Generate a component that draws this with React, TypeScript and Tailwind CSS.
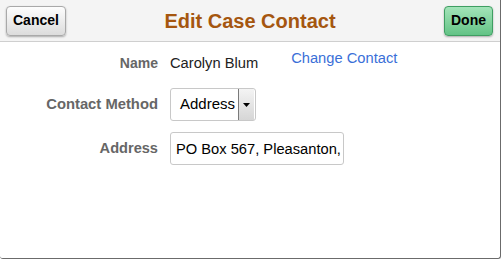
import { useState } from 'react'

export default function App() {
  const [method, setMethod] = useState('Address')
  const [address, setAddress] = useState('PO Box 567, Pleasanton,')

  return (
    <div className="w-[501px] h-[259px] bg-white font-['Liberation_Sans',Arial,sans-serif] flex flex-col border-r border-b border-[#6b6b6b] rounded-b-[3px] overflow-hidden">
      {/* Header */}
      <div className="h-[42px] shrink-0 bg-[#f4f4f4] border-b border-[#cfcfcf] grid grid-cols-[1fr_auto_1fr] items-center pl-[6px] pr-[7px]">
        <div className="flex">
          <button className="h-[30px] px-[6px] rounded-[4px] border border-[#a9a9a9] bg-gradient-to-b from-[#fdfdfd] to-[#dcdcdc] shadow-[0_1px_2px_rgba(0,0,0,0.3)] text-[14px] font-bold text-black">
            Cancel
          </button>
        </div>
        <h1 className="text-[20px] font-bold text-[#a5560f] pl-[1px]">Edit Case Contact</h1>
        <div className="flex justify-end">
          <button className="h-[30px] px-[6px] rounded-[4px] border border-[#3f9e62] bg-gradient-to-b from-[#a3e4b9] to-[#62c386] shadow-[0_1px_2px_rgba(0,0,0,0.3)] text-[14px] font-bold text-black">
            Done
          </button>
        </div>
      </div>

      {/* Form */}
      <div className="flex-1 pt-[10px]">
        <div className="grid grid-cols-[158px_1fr] gap-x-[12px] items-center">
          <div className="text-right text-[14px] font-bold text-[#666] h-[22px] leading-[22px]">Name</div>
          <div className="flex items-start h-[22px]">
            <span className="text-[14.7px] text-[#222] leading-[22px]">Carolyn Blum</span>
            <a href="#" className="ml-[33px] text-[14.7px] text-[#3a6fd8] leading-[14px] mt-[-1px]">Change Contact</a>
          </div>

          <div className="text-right text-[14.8px] font-bold text-[#666] mt-[14px]">Contact Method</div>
          <div className="mt-[14px]">
            <div className="w-[86px] h-[33px] flex items-center border border-[#c8c8c8] rounded-[3px] bg-white pl-[9px] pr-[1px]">
              <span className="flex-1 text-[15px] text-black">{method}</span>
              <button
                onClick={() => setMethod(method)}
                className="w-[16px] h-[31px] border-l border-[#7a7a7a] bg-gradient-to-b from-[#f4f4f4] to-[#d6d6d6] flex items-center justify-center"
              >
                <svg width="7" height="4" viewBox="0 0 7 4">
                  <path d="M0 0h7L3.5 4z" fill="#000" />
                </svg>
              </button>
            </div>
          </div>

          <div className="text-right text-[14.6px] font-bold text-[#666] mt-[11px]">Address</div>
          <div className="mt-[11px]">
            <input
              value={address}
              onChange={(e) => setAddress(e.target.value)}
              className="w-[174px] h-[33px] border border-[#c8c8c8] rounded-[3px] pl-[5px] text-[14.7px] text-black outline-none"
            />
          </div>
        </div>
      </div>
    </div>
  )
}
